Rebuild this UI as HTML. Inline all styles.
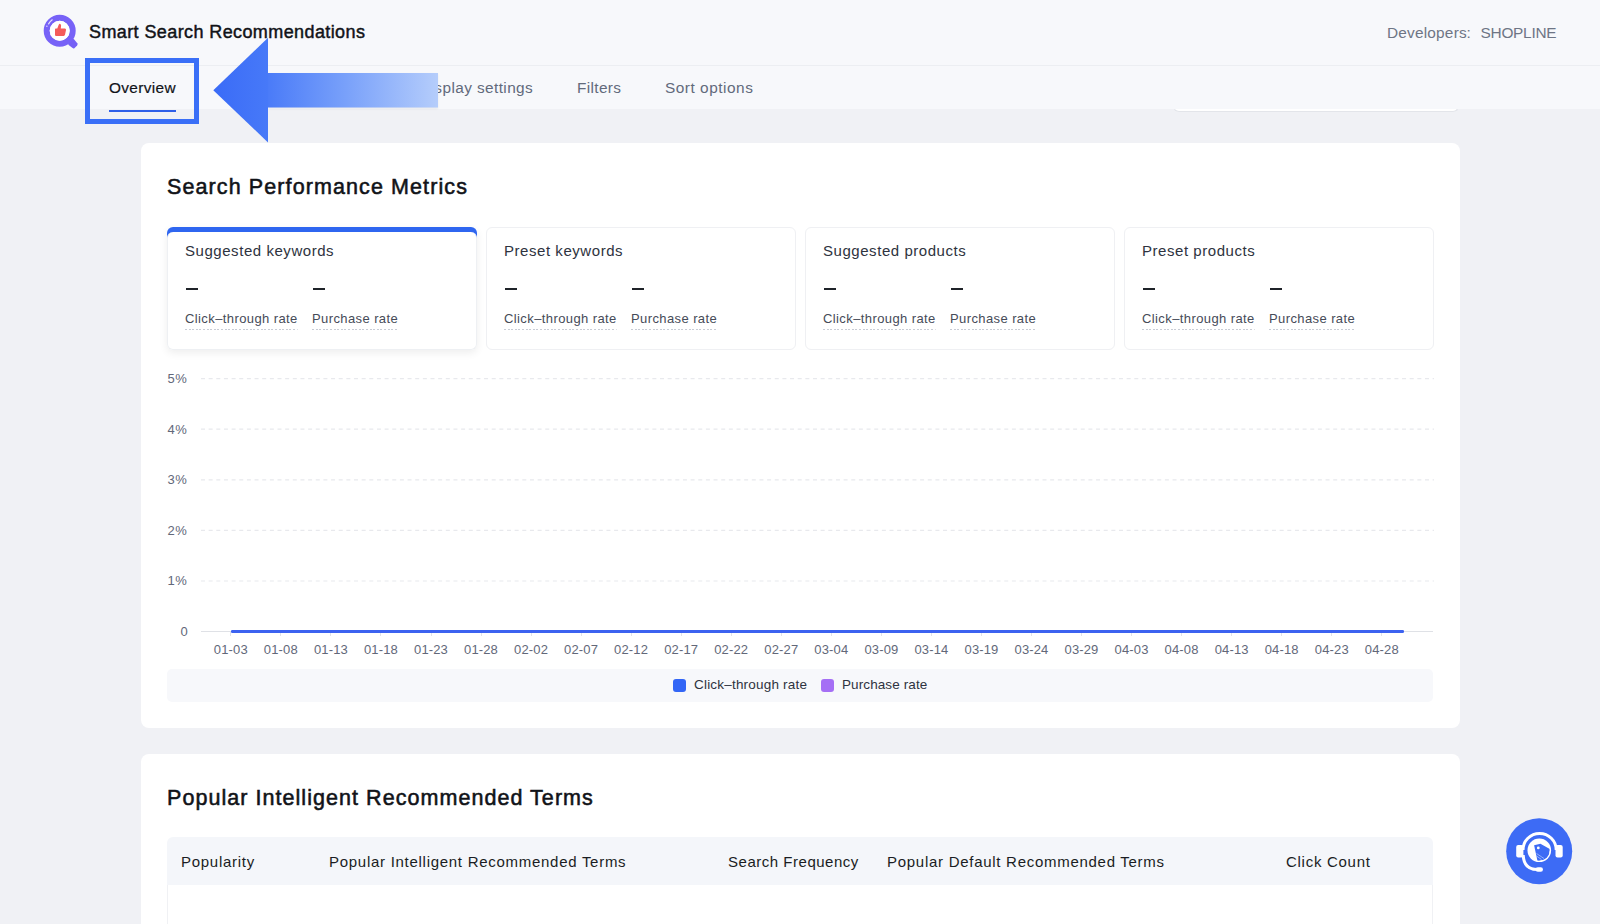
<!DOCTYPE html>
<html><head><meta charset="utf-8">
<style>
*{margin:0;padding:0;box-sizing:border-box}
html,body{width:1600px;height:924px;overflow:hidden;background:#f0f1f5;font-family:"Liberation Sans",sans-serif;position:relative}
.a{position:absolute;white-space:nowrap}
.t{position:absolute;white-space:nowrap;line-height:1}
#hdr{position:absolute;left:0;top:0;width:1600px;height:65px;background:#f7f8fb}
#hline{position:absolute;left:0;top:65px;width:1600px;height:1px;background:#eceef2}
#tabs{position:absolute;left:0;top:66px;width:1600px;height:42.7px;background:#f7f8fb}
.card{position:absolute;background:#fff;border-radius:8px}
.mc{position:absolute;top:227px;width:310px;height:123px;border:1px solid #eff0f3;border-radius:6px;background:#fff}
.mc .lb{position:absolute;left:17px;top:14.7px;font-size:15px;line-height:1;color:#2e3340;letter-spacing:0.55px}
.dash{position:absolute;top:59.5px;width:12px;height:2.6px;background:#1f2329}
.rl{position:absolute;top:84px;font-size:13px;line-height:1;color:#464b58;letter-spacing:0.4px;padding-bottom:5px;background:repeating-linear-gradient(90deg,#c8ccd5 0 2px,transparent 2px 3.6px) left bottom/calc(100% - 0.4px) 1px no-repeat}
.yl{position:absolute;font-size:13px;line-height:1;color:#626879;text-align:right;width:40px;letter-spacing:0.3px}
.xl{position:absolute;top:642.5px;font-size:13px;line-height:1;color:#626879;width:50px;text-align:center;letter-spacing:0.15px}
.grid{position:absolute;left:201px;width:1230px;height:1px;background:repeating-linear-gradient(90deg,#e3e4e8 0 4px,transparent 4px 7.5px)}
.th{position:absolute;top:853.6px;font-size:15px;line-height:1;color:#1a1d23;letter-spacing:0.72px}
</style></head>
<body>
<div id="hdr"></div>
<div id="hline"></div>
<div id="tabs"></div>

<!-- logo -->
<svg class="a" style="left:40px;top:12px" width="42" height="40" viewBox="40 12 42 40">
  <path d="M69.5 37.5 L74 39.2 L77.3 43.3 Q78 44.4 77.1 45.4 L74.6 47.9 Q73.6 48.8 72.6 48.1 L68.3 44.8 Z" fill="#7560f5"/>
  <circle cx="59.7" cy="30.8" r="13" fill="none" stroke="#7762f7" stroke-width="6"/>
  <circle cx="59.7" cy="30.8" r="10" fill="#fff"/>
  <path d="M48.6 23.9 Q50 21.6 52.2 19.8" stroke="#fff" stroke-width="1.2" fill="none" stroke-linecap="round" opacity="0.8"/><circle cx="46.9" cy="26.2" r="0.7" fill="#fff" opacity="0.8"/>
  <path d="M55 29.3 Q55 28.6 55.8 28.6 L57.3 28.6 L58.6 25 Q59.2 23.6 60.2 23.9 Q61.3 24.3 61.1 25.8 L60.8 28.4 L64.9 28.4 Q66.3 28.6 66 30 L65 34.8 Q64.7 35.9 63.7 35.9 L55.8 35.9 Q55 35.9 55 35.1 Z" fill="#f45b5b"/>
</svg>
<div class="t" style="left:89px;top:23px;font-size:18px;color:#111318;letter-spacing:0.4px;-webkit-text-stroke:0.45px #111318">Smart Search Recommendations</div>
<div class="t" style="left:1387px;top:25px;font-size:15.4px;color:#6e7585;letter-spacing:0.2px">Developers</div>
<div class="t" style="left:1466.5px;top:25px;font-size:15.4px;color:#6e7585">:</div>
<div class="t" style="left:1480.5px;top:25px;font-size:15.4px;color:#6e7585;letter-spacing:-0.25px">SHOPLINE</div>

<!-- hidden date picker bottom -->
<div class="a" style="left:1173px;top:96px;width:286px;height:16px;border:1px solid #e3e5ea;border-top:none;border-radius:0 0 6px 6px;background:#fff"></div>
<div class="a" style="left:0;top:66px;width:1600px;height:42.7px;background:#f7f8fb"></div>
<!-- tabs -->
<div class="t" style="left:109px;top:80px;font-size:15.4px;color:#111318;letter-spacing:0.35px;-webkit-text-stroke:0.2px #111318">Overview</div>
<div class="a" style="left:109px;top:110px;width:67px;height:2px;background:#2f5fe8"></div>
<div class="t" style="left:419px;top:80px;font-size:15.4px;color:#626a7b;letter-spacing:0.4px">Display settings</div>
<div class="t" style="left:577px;top:80px;font-size:15.4px;color:#626a7b;letter-spacing:0.35px">Filters</div>
<div class="t" style="left:665px;top:80px;font-size:15.4px;color:#626a7b;letter-spacing:0.52px">Sort options</div>


<!-- card 1 -->
<div class="card" style="left:141px;top:143px;width:1319px;height:585px"></div>
<div class="t" style="left:167px;top:177.2px;font-size:21.5px;color:#111318;letter-spacing:1.1px;-webkit-text-stroke:0.55px #111318">Search Performance Metrics</div>

<div class="mc" style="left:167px;border:none;background:transparent;box-shadow:0 3px 8px rgba(0,0,0,0.07)">
  <div class="a" style="left:0;top:0;width:310px;height:12px;background:#2f66f0;border-radius:6px 6px 0 0"></div>
  <div class="a" style="left:0;top:5px;width:310px;height:118px;background:#fff;border-radius:6px;border:1px solid #eef0f3;border-top:none"></div>
  <div class="lb" style="left:18px;top:15.7px">Suggested keywords</div>
  <div class="dash" style="left:18.5px;top:60.5px"></div><div class="dash" style="left:146px;top:60.5px"></div>
  <div class="rl" style="left:18px;top:85px">Click–through rate</div><div class="rl" style="left:145px;top:85px">Purchase rate</div>
</div>
<div class="mc" style="left:486px">
  <div class="lb">Preset keywords</div>
  <div class="dash" style="left:17.5px"></div><div class="dash" style="left:145px"></div>
  <div class="rl" style="left:17px">Click–through rate</div><div class="rl" style="left:144px">Purchase rate</div>
</div>
<div class="mc" style="left:805px">
  <div class="lb">Suggested products</div>
  <div class="dash" style="left:17.5px"></div><div class="dash" style="left:145px"></div>
  <div class="rl" style="left:17px">Click–through rate</div><div class="rl" style="left:144px">Purchase rate</div>
</div>
<div class="mc" style="left:1124px">
  <div class="lb">Preset products</div>
  <div class="dash" style="left:17.5px"></div><div class="dash" style="left:145px"></div>
  <div class="rl" style="left:17px">Click–through rate</div><div class="rl" style="left:144px">Purchase rate</div>
</div>

<!-- chart -->
<svg class="a" style="left:0;top:0" width="1600" height="924" viewBox="0 0 1600 924"><line x1="201" y1="378.6" x2="1434" y2="378.6" stroke="#e8e9ed" stroke-width="1.2" stroke-dasharray="4 3.65"/><line x1="201" y1="429.2" x2="1434" y2="429.2" stroke="#e8e9ed" stroke-width="1.2" stroke-dasharray="4 3.65"/><line x1="201" y1="479.8" x2="1434" y2="479.8" stroke="#e8e9ed" stroke-width="1.2" stroke-dasharray="4 3.65"/><line x1="201" y1="530.4" x2="1434" y2="530.4" stroke="#e8e9ed" stroke-width="1.2" stroke-dasharray="4 3.65"/><line x1="201" y1="581.0" x2="1434" y2="581.0" stroke="#e8e9ed" stroke-width="1.2" stroke-dasharray="4 3.65"/></svg>
<div class="yl" style="left:147px;top:371.9px">5%</div>
<div class="yl" style="left:147px;top:422.5px">4%</div>
<div class="yl" style="left:147px;top:473.1px">3%</div>
<div class="yl" style="left:147px;top:523.7px">2%</div>
<div class="yl" style="left:147px;top:574.3px">1%</div>
<div class="yl" style="left:148px;top:624.8px">0</div>
<div class="a" style="left:201px;top:631px;width:1232px;height:1px;background:#dfe1e6"></div>
<div class="a" style="left:230.3px;top:632px;width:1px;height:4px;background:#e3e4e8"></div>
<div class="xl" style="left:205.8px">01-03</div>
<div class="a" style="left:280.3px;top:632px;width:1px;height:4px;background:#e3e4e8"></div>
<div class="xl" style="left:255.8px">01-08</div>
<div class="a" style="left:330.4px;top:632px;width:1px;height:4px;background:#e3e4e8"></div>
<div class="xl" style="left:305.9px">01-13</div>
<div class="a" style="left:380.4px;top:632px;width:1px;height:4px;background:#e3e4e8"></div>
<div class="xl" style="left:355.9px">01-18</div>
<div class="a" style="left:430.5px;top:632px;width:1px;height:4px;background:#e3e4e8"></div>
<div class="xl" style="left:406.0px">01-23</div>
<div class="a" style="left:480.5px;top:632px;width:1px;height:4px;background:#e3e4e8"></div>
<div class="xl" style="left:456.0px">01-28</div>
<div class="a" style="left:530.6px;top:632px;width:1px;height:4px;background:#e3e4e8"></div>
<div class="xl" style="left:506.1px">02-02</div>
<div class="a" style="left:580.6px;top:632px;width:1px;height:4px;background:#e3e4e8"></div>
<div class="xl" style="left:556.1px">02-07</div>
<div class="a" style="left:630.6px;top:632px;width:1px;height:4px;background:#e3e4e8"></div>
<div class="xl" style="left:606.1px">02-12</div>
<div class="a" style="left:680.7px;top:632px;width:1px;height:4px;background:#e3e4e8"></div>
<div class="xl" style="left:656.2px">02-17</div>
<div class="a" style="left:730.7px;top:632px;width:1px;height:4px;background:#e3e4e8"></div>
<div class="xl" style="left:706.2px">02-22</div>
<div class="a" style="left:780.8px;top:632px;width:1px;height:4px;background:#e3e4e8"></div>
<div class="xl" style="left:756.3px">02-27</div>
<div class="a" style="left:830.8px;top:632px;width:1px;height:4px;background:#e3e4e8"></div>
<div class="xl" style="left:806.3px">03-04</div>
<div class="a" style="left:880.9px;top:632px;width:1px;height:4px;background:#e3e4e8"></div>
<div class="xl" style="left:856.4px">03-09</div>
<div class="a" style="left:930.9px;top:632px;width:1px;height:4px;background:#e3e4e8"></div>
<div class="xl" style="left:906.4px">03-14</div>
<div class="a" style="left:981.0px;top:632px;width:1px;height:4px;background:#e3e4e8"></div>
<div class="xl" style="left:956.5px">03-19</div>
<div class="a" style="left:1031.0px;top:632px;width:1px;height:4px;background:#e3e4e8"></div>
<div class="xl" style="left:1006.5px">03-24</div>
<div class="a" style="left:1081.0px;top:632px;width:1px;height:4px;background:#e3e4e8"></div>
<div class="xl" style="left:1056.5px">03-29</div>
<div class="a" style="left:1131.1px;top:632px;width:1px;height:4px;background:#e3e4e8"></div>
<div class="xl" style="left:1106.6px">04-03</div>
<div class="a" style="left:1181.1px;top:632px;width:1px;height:4px;background:#e3e4e8"></div>
<div class="xl" style="left:1156.6px">04-08</div>
<div class="a" style="left:1231.2px;top:632px;width:1px;height:4px;background:#e3e4e8"></div>
<div class="xl" style="left:1206.7px">04-13</div>
<div class="a" style="left:1281.2px;top:632px;width:1px;height:4px;background:#e3e4e8"></div>
<div class="xl" style="left:1256.7px">04-18</div>
<div class="a" style="left:1331.3px;top:632px;width:1px;height:4px;background:#e3e4e8"></div>
<div class="xl" style="left:1306.8px">04-23</div>
<div class="a" style="left:1381.3px;top:632px;width:1px;height:4px;background:#e3e4e8"></div>
<div class="xl" style="left:1356.8px">04-28</div>
<div class="a" style="left:230.5px;top:630.3px;width:1173px;height:2.4px;border-radius:1.2px;background:#3c62f0"></div>

<!-- legend -->
<div class="a" style="left:167px;top:669px;width:1266px;height:33px;background:#f7f8fb;border-radius:5px"></div>
<div class="a" style="left:673px;top:679px;width:13px;height:13px;border-radius:3px;background:#3366f6"></div>
<div class="t" style="left:694px;top:678px;font-size:13.5px;color:#2e3340;letter-spacing:0.2px">Click–through rate</div>
<div class="a" style="left:821px;top:679px;width:13px;height:13px;border-radius:3px;background:#a56ff5"></div>
<div class="t" style="left:842px;top:678px;font-size:13.5px;color:#2e3340;letter-spacing:0.1px">Purchase rate</div>

<!-- card 2 -->
<div class="card" style="left:141px;top:754px;width:1319px;height:200px"></div>
<div class="t" style="left:167px;top:788.3px;font-size:21.5px;color:#111318;letter-spacing:1.05px;-webkit-text-stroke:0.55px #111318">Popular Intelligent Recommended Terms</div>
<div class="a" style="left:167px;top:837px;width:1266px;height:48px;background:#f4f6fa;border-radius:6px 6px 0 0"></div>
<div class="a" style="left:167px;top:885px;width:1266px;height:60px;border-left:1px solid #f0f1f4;border-right:1px solid #f0f1f4"></div>
<div class="th" style="left:181px">Popularity</div>
<div class="th" style="left:329px">Popular Intelligent Recommended Terms</div>
<div class="th" style="left:728px;letter-spacing:0.52px">Search Frequency</div>
<div class="th" style="left:887px">Popular Default Recommended Terms</div>
<div class="th" style="left:1286px">Click Count</div>

<!-- annotation box -->
<div class="a" style="left:85px;top:58px;width:114px;height:66px;border:5px solid #3a6ff7"></div>

<!-- arrow -->
<svg class="a" style="left:200px;top:30px" width="250" height="120" viewBox="200 30 250 120">
  <defs>
    <linearGradient id="sg" x1="268" y1="0" x2="438" y2="0" gradientUnits="userSpaceOnUse">
      <stop offset="0" stop-color="#4a7bf8"/>
      <stop offset="0.45" stop-color="#78a0fa"/>
      <stop offset="1" stop-color="#b5cdfb"/>
    </linearGradient>
    <linearGradient id="hg" x1="213" y1="0" x2="268" y2="0" gradientUnits="userSpaceOnUse"><stop offset="0" stop-color="#3a6bf7"/><stop offset="1" stop-color="#4779f8"/></linearGradient>
    <filter id="sh" x="-10%" y="-30%" width="120%" height="160%"><feGaussianBlur stdDeviation="1"/></filter>
  </defs>
  <rect x="268" y="74" width="170" height="35" fill="#000" opacity="0.06" filter="url(#sh)"/>
  <rect x="267" y="73" width="171" height="34.5" fill="url(#sg)"/>
  <path d="M213.3 90.2 L268 37.8 L268 142.5 Z" fill="url(#hg)"/>
</svg>

<!-- support button -->
<svg class="a" style="left:1500px;top:812px" width="80" height="80" viewBox="1500 812 80 80">
  <defs><clipPath id="cc"><circle cx="1539.3" cy="850.3" r="10.6"/></clipPath></defs>
  <circle cx="1539.2" cy="851.2" r="33" fill="#3d6bf5"/>
  <path d="M1523 850 A16.6 16.6 0 0 1 1556.2 850" fill="none" stroke="#fff" stroke-width="3"/>
  <rect x="1516.2" y="845" width="7.2" height="12.4" rx="2" fill="#fff"/>
  <rect x="1555.5" y="845" width="7.2" height="12.4" rx="2" fill="#fff"/>
  <path d="M1523.2 855 Q1523.8 869.5 1537.5 869.5" fill="none" stroke="#fff" stroke-width="3"/>
  <rect x="1535.6" y="867.3" width="7.4" height="4.5" rx="2.2" fill="#fff"/>
  <circle cx="1539.3" cy="850.3" r="11.8" fill="#fff"/>
  <g clip-path="url(#cc)">
    <path d="M1534.1 845.2 L1540.4 843.7 L1549.8 849 L1549 856 L1545 859.5 L1537.5 861 Z" fill="#3d6bf5"/>
    <path d="M1536.5 853.5 L1544 858.5 M1536.5 856 L1541.5 859.5" stroke="#bcd0fb" stroke-width="0.7"/>
  </g>
  <circle cx="1538.3" cy="847.9" r="1.4" fill="#fff"/>
</svg>
</body></html>
